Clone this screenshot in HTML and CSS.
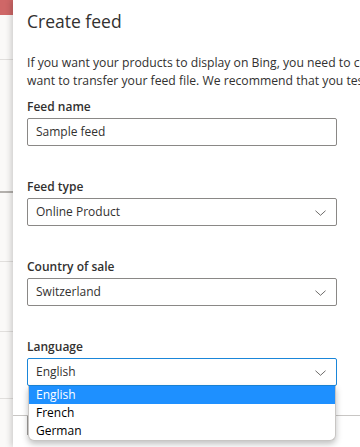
FILE: index.html
```html
<!DOCTYPE html>
<html lang="en">
<head>
  <meta charset="UTF-8">
  <meta name="viewport" content="width=device-width, initial-scale=1.0"/>
  <title>Create feed</title>
  <link rel="stylesheet" href="styles.css">
</head>
<body>

  <!-- Page behind the panel -->
  <div class="backdrop">
    <div class="backdrop-bar"></div>
    <div class="backdrop-row row-1"></div>
    <div class="backdrop-row row-2"></div>
    <div class="backdrop-row row-3"></div>
    <div class="backdrop-row row-4"></div>
    <div class="backdrop-row row-5"></div>
  </div>

  <!-- Create feed panel -->
  <aside class="panel">
    <h1>Create feed</h1>
    <p class="intro">
      If you want your products to display on Bing, you need to create a feed and choose how you<br>
      want to transfer your feed file. We recommend that you test your feed before you submit it.
    </p>

    <div class="field">
      <label>Feed name</label>
      <div class="input">Sample feed</div>
    </div>

    <div class="field">
      <label>Feed type</label>
      <div class="input select">Online Product
        <svg class="chevron" viewBox="0 0 12 6"><path d="M0.5 0.5 L6 5.5 L11.5 0.5"/></svg>
      </div>
    </div>

    <div class="field">
      <label>Country of sale</label>
      <div class="input select">Switzerland
        <svg class="chevron" viewBox="0 0 12 6"><path d="M0.5 0.5 L6 5.5 L11.5 0.5"/></svg>
      </div>
    </div>

    <div class="field open">
      <label>Language</label>
      <div class="input select focused">English
        <svg class="chevron" viewBox="0 0 12 6"><path d="M0.5 0.5 L6 5.5 L11.5 0.5"/></svg>
      </div>
      <ul class="options">
        <li class="selected">English</li>
        <li>French</li>
        <li>German</li>
      </ul>
    </div>

    <div class="footer">
      <div class="footer-box wide"></div>
      <div class="footer-box"></div>
    </div>
  </aside>

</body>
</html>
```

FILE: styles.css
```css
* {
  margin: 0;
  padding: 0;
  box-sizing: border-box;
}

body {
  font-family: 'Open Sans', 'Noto Sans', sans-serif;
  color: #323130;
  width: 360px;
  height: 447px;
  overflow: hidden;
  display: flex;
  background: #faf9f8;
}

/* Page behind the panel */
.backdrop {
  width: 13px;
  flex-shrink: 0;
  display: flex;
  flex-direction: column;
  background: #faf9f8;
}

.backdrop-bar {
  height: 15px;
  background: #cf6767;
}

.backdrop-row {
  border-bottom: 1px solid #e1dfdd;
}

.row-1 { height: 45px; }
.row-2 { height: 133px; border-bottom: 2px solid #b3b0ad; }
.row-3 { height: 69px; }
.row-4 { height: 70px; }
.row-5 { height: 67px; }

/* Panel */
.panel {
  flex: 1;
  min-width: 0;
  background: #fff;
  padding: 7px 0 0 14px;
  box-shadow: -2px 0 6px rgba(0, 0, 0, 0.18);
  position: relative;
  overflow: hidden;
}

h1 {
  font-size: 17.5px;
  font-weight: 400;
  line-height: 28px;
}

.intro {
  font-size: 12.2px;
  line-height: 18px;
  white-space: nowrap;
  margin-top: 19px;
  margin-bottom: 5px;
}

.field {
  width: 310px;
  margin-bottom: 29px;
  position: relative;
}

.field label {
  display: block;
  font-size: 12px;
  font-weight: 600;
  line-height: 20px;
  padding-top: 2px;
  margin-bottom: 1px;
}

.input {
  height: 28px;
  border: 1px solid #8a8886;
  border-radius: 2px;
  padding: 0 8px;
  font-size: 12px;
  line-height: 26px;
  position: relative;
}

.input.focused {
  border-color: #1a86d9;
}

.chevron {
  position: absolute;
  right: 10px;
  top: 11px;
  width: 11px;
  height: 6px;
  fill: none;
  stroke: #605e5c;
  stroke-width: 1;
}

/* Open dropdown */
.options {
  position: absolute;
  top: 100%;
  left: 1px;
  right: 1px;
  list-style: none;
  background: #fff;
  border: 1px solid #c8c6c4;
  border-top: none;
  border-radius: 0 0 6px 6px;
  box-shadow: 0 3px 6px rgba(0, 0, 0, 0.25);
  z-index: 10;
  overflow: hidden;
}

.options li {
  height: 18px;
  line-height: 18px;
  padding-left: 7px;
  font-size: 12px;
  color: #000;
}

.options li.selected {
  background: #1e90ff;
  color: #fff;
}

/* Footer under the dropdown */
.footer {
  display: flex;
  gap: 7px;
  margin-top: 22px;
  margin-left: -14px;
  padding-left: 14px;
  border-top: 1px solid #c8c6c4;
  height: 20px;
}

.footer-box {
  width: 80px;
  border-left: 1px solid #a19f9d;
}

.footer-box.wide {
  width: 253px;
  border-right: 1px solid #a19f9d;
}
```
